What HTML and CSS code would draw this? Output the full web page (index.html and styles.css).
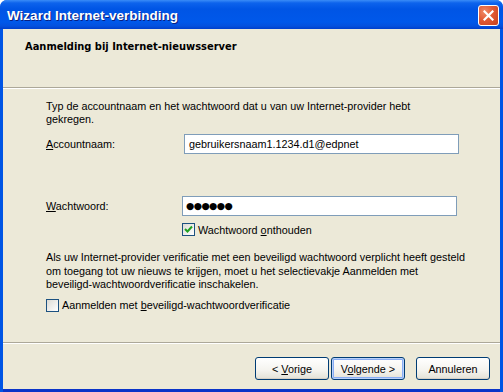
FILE: index.html
```html
<!DOCTYPE html>
<html lang="nl">
<head>
  <meta charset="UTF-8" />
  <title>Wizard Internet-verbinding</title>
  <link rel="stylesheet" href="styles.css">
</head>
<body>

  <div class="window">
    <div class="titlebar">
      <span class="title">Wizard Internet-verbinding</span>
      <button class="close" aria-label="Sluiten">
        <svg width="11" height="11" viewBox="0 0 11 11">
          <path d="M1.5 1.5 L9.5 9.5 M9.5 1.5 L1.5 9.5" stroke="#fff" stroke-width="2.2" stroke-linecap="square"/>
        </svg>
      </button>
    </div>

    <div class="frame">
      <div class="header">Aanmelding bij Internet-nieuwsserver</div>
      <div class="rule"></div>

      <div class="body">
        <p class="text">Typ de accountnaam en het wachtwoord dat u van uw Internet-provider hebt<br>gekregen.</p>

        <div class="row first">
          <label class="label"><u>A</u>ccountnaam:</label>
          <div class="field">gebruikersnaam1.1234.d1@edpnet</div>
        </div>

        <div class="row second">
          <label class="label short"><u>W</u>achtwoord:</label>
          <div class="field dots">&#9679;&#9679;&#9679;&#9679;&#9679;&#9679;</div>
        </div>

        <div class="check indent">
          <span class="box checked">
            <svg width="9" height="9" viewBox="0 0 9 9">
              <path d="M1 4 L3.5 6.5 L8 1.5" fill="none" stroke="#21a121" stroke-width="2"/>
            </svg>
          </span>
          <span>Wachtwoord <u>o</u>nthouden</span>
        </div>

        <p class="text second-text">Als uw Internet-provider verificatie met een beveiligd wachtwoord verplicht heeft gesteld<br>om toegang tot uw nieuws te krijgen, moet u het selectievakje Aanmelden met<br>beveiligd-wachtwoordverificatie inschakelen.</p>

        <div class="check">
          <span class="box"></span>
          <span>Aanmelden met <u>b</u>eveiligd-wachtwoordverificatie</span>
        </div>
      </div>

      <div class="rule"></div>
      <div class="footer">
        <button class="btn">&lt; <u>V</u>orige</button>
        <button class="btn default">V<u>o</u>lgende &gt;</button>
        <button class="btn cancel">Annuleren</button>
      </div>
    </div>
  </div>

</body>
</html>
```

FILE: styles.css
```css
body {
  margin: 0px;
  padding: 0px;
  font-family: 'Liberation Sans', Arial, sans-serif;
  font-size: 10.8px;
  color: #000;
}

.window {
  width: 503px;
  height: 392px;
  display: flex;
  flex-direction: column;
  background: #0055e5;
  border-radius: 7px 7px 0 0;
  overflow: hidden;
}

.titlebar {
  height: 29px;
  display: flex;
  align-items: center;
  justify-content: space-between;
  padding: 0 4px 0 7px;
  background: linear-gradient(to bottom, #3a8cf7 0px, #0d63ec 3px, #0055e5 9px, #0058ea 22px, #0451de 26px, #003fcc 29px);
}

.title {
  color: #fff;
  font-family: 'Liberation Sans', sans-serif;
  font-weight: bold;
  font-size: 13.5px;
  text-shadow: 1px 1px 0 #0a1f80;
  padding-top: 1px;
}

.close {
  width: 21px;
  height: 21px;
  padding: 0;
  border: 1px solid #fff;
  border-radius: 3px;
  background: radial-gradient(circle at 30% 30%, #f08a68, #e15a34 45%, #c8401d);
  display: flex;
  align-items: center;
  justify-content: center;
  margin-top: 2px;
}

.frame {
  flex: 1;
  display: flex;
  flex-direction: column;
  margin: 0 3px 0 3px;
  border-bottom: 3px solid #0a34c8;
  background: #ece9d8;
}

.header {
  height: 58px;
  box-sizing: border-box;
  padding: 11px 0 0 22px;
  font-family: 'DejaVu Sans Condensed', 'DejaVu Sans', sans-serif;
  font-size: 11px;
  font-weight: bold;
  line-height: 13px;
}

.rule {
  border-top: 1px solid #aca899;
  border-bottom: 1px solid #fff;
}

.body {
  flex: 1;
  padding: 11px 0 0 43px;
}

.text {
  margin: 0;
  line-height: 13px;
  white-space: nowrap;
}

.second-text {
  margin-top: 15px;
  line-height: 13.5px;
}

.row {
  display: flex;
  align-items: center;
}

.row.first {
  margin-top: 8px;
}

.row.second {
  margin-top: 42px;
}

.label {
  width: 138px;
}

.label.short {
  width: 136px;
}

.field {
  width: 269px;
  height: 18px;
  line-height: 18px;
  border: 1px solid #7f9db9;
  background: #fff;
  padding: 0 0 0 4px;
  box-sizing: content-box;
}

.field.dots {
  font-family: 'DejaVu Sans', sans-serif;
  font-size: 9.5px;
  letter-spacing: -0.6px;
  padding-left: 3px;
  width: 270px;
}

.check {
  display: flex;
  align-items: center;
  gap: 3px;
  margin-top: 7px;
  height: 13px;
}

.check.indent {
  margin-left: 136px;
}

.box {
  width: 11px;
  height: 11px;
  border: 1px solid #1c5180;
  background: linear-gradient(135deg, #dcdbd5, #fff);
  display: flex;
  align-items: center;
  justify-content: center;
}

.footer {
  display: flex;
  justify-content: flex-end;
  padding: 13px 10px 9px 0;
  gap: 2px;
}

.btn {
  width: 74px;
  height: 23px;
  font-family: inherit;
  font-size: 10.8px;
  border: 1px solid #003c74;
  border-radius: 3px;
  background: linear-gradient(to bottom, #fff, #f4f3ee 60%, #e3e1d6);
  box-shadow: inset 0 -1px 0 #d6d0c5;
  padding: 0;
}

.btn.default {
  box-shadow: inset 0 0 0 1px #b9d1fa, inset 0 0 0 2px #89adf4;
}

.btn.cancel {
  margin-left: 9px;
}
```
